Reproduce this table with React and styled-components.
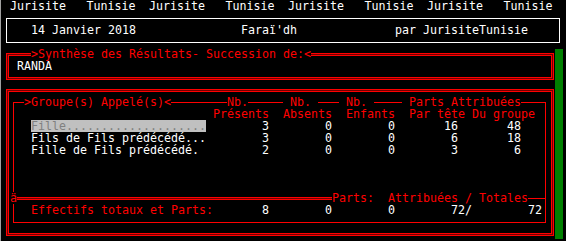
import React from 'react';
import styled, { createGlobalStyle } from 'styled-components';

const CH = 7;
const RED = '#ff0000';
const DARK_RED = '#700000';
const WHITE = '#ffffff';

const GlobalStyle = createGlobalStyle`
  html, body { margin: 0; padding: 0; background: #000; }
  #root { width: 566px; height: 241px; }
`;

const Screen = styled.div`
  box-sizing: border-box;
  width: 566px;
  height: 241px;
  overflow: hidden;
  background: #000;
  border-left: 1px solid #a0a0a0;
  padding-left: 2px;
  font-family: "DejaVu Sans Mono", "Liberation Mono", monospace;
  font-size: 11.63px;
  line-height: 12px;
  color: ${WHITE};
  white-space: pre;
`;

const Banner = styled.div`
  display: flex;
  height: 12px;
  padding-left: ${CH}px;
`;

const BannerWord = styled.span`
  width: ${p => p.$cols * CH}px;
`;

const DateBox = styled.div`
  box-sizing: border-box;
  margin: 6px 0 0 3px;
  width: 554px;
  height: 25px;
  border: 1px solid ${WHITE};
  padding: 5px 0 0 24px;
  display: grid;
  grid-template-columns: ${30 * CH}px ${22 * CH}px auto;
`;

const Main = styled.div`
  display: flex;
  margin-top: 6px;
`;

const Panels = styled.div`
  box-sizing: border-box;
  width: 552px;
  padding: 6px 0 0 5px;
  display: flex;
  flex-direction: column;
`;

const ScrollBar = styled.div`
  width: 8px;
  height: 190px;
  background: #008000;
`;

const Frame = styled.div`
  box-sizing: border-box;
  width: 544px;
  height: ${p => p.$h}px;
  margin-top: ${p => p.$gap || 0}px;
  border: 1px solid ${RED};
  box-shadow: 0 0 0 1px ${DARK_RED}, 0 0 0 2px ${RED};
  padding: ${p => p.$pad};
  display: flex;
  flex-direction: column;
`;

const Legend = styled.span`
  display: inline-block;
  width: fit-content;
  height: 12px;
  background: #000;
  color: ${RED};
  margin-left: ${p => (p.$at || 0) * CH}px;
  margin-top: ${p => p.$lift || 0}px;
`;

const Line = styled.div`
  height: 12px;
  color: ${p => p.$color || WHITE};
`;

const GroupBox = styled.div`
  box-sizing: border-box;
  height: 121px;
  border: 1px solid ${RED};
  padding-bottom: 6px;
  display: flex;
  flex-direction: column;
`;

const TableRow = styled.div`
  display: grid;
  grid-template-columns: ${26 * CH}px ${8 * CH}px ${9 * CH}px ${9 * CH}px ${11 * CH}px ${10 * CH}px;
  height: 12px;
  padding-left: 17px;
  margin-top: ${p => p.$lift || 0}px;
  color: ${p => p.$color || WHITE};
`;

const Cell = styled.div`
  text-align: ${p => (p.$left ? 'left' : 'right')};
  padding-right: ${p => (p.$inset || 0) * CH}px;
  padding-left: ${p => (p.$indent || 0) * CH}px;
  grid-column: ${p => (p.$span ? `span ${p.$span}` : 'auto')};
`;

const Name = styled.span`
  display: inline-block;
  height: 12px;
  background: ${p => (p.$selected ? '#c0c0c0' : 'transparent')};
  color: ${p => (p.$selected ? '#808080' : p.$red ? RED : WHITE)};
`;

const Divider = styled.div`
  display: flex;
  height: 12px;
  margin-top: auto;
  margin-left: -4px;
`;

const Junction = styled.span`
  width: ${CH}px;
  background: #000;
  color: ${RED};
`;

const DoubleRule = styled.div`
  flex: 1;
  box-sizing: border-box;
  height: 3px;
  margin-top: 5px;
  border-top: 1px solid ${RED};
  border-bottom: 1px solid ${RED};
  background: ${DARK_RED};
`;

const SingleRule = styled.div`
  width: 17px;
  height: 1px;
  margin-top: 6px;
  background: ${RED};
`;

const DividerLabel = styled.span`
  color: ${RED};
  background: #000;
`;

const rows = [
  { name: 'Fille....................', selected: true, p: 3, a: 0, e: 0, t: 16, g: 48 },
  { name: 'Fils de Fils prédécédé...', p: 3, a: 0, e: 0, t: 6, g: 18 },
  { name: 'Fille de Fils prédécédé.', p: 2, a: 0, e: 0, t: 3, g: 6 },
];

export default function App() {
  return (
    <>
      <GlobalStyle />
      <Screen>
        <Banner>
          {[0, 1, 2, 3].map(i => (
            <React.Fragment key={i}>
              <BannerWord $cols={11}>Jurisite</BannerWord>
              <BannerWord $cols={9}>Tunisie</BannerWord>
            </React.Fragment>
          ))}
        </Banner>
        <DateBox>
          <span>14 Janvier 2018</span>
          <span>Faraï'dh</span>
          <span>par JurisiteTunisie</span>
        </DateBox>
        <Main>
          <Panels>
            <Frame $h={23} $pad="0 0 0 8px">
              <Legend $at={2} $lift={-8}>&gt;Synthèse des Résultats- Succession de:&lt;</Legend>
              <Line>RANDA</Line>
            </Frame>
            <Frame $h={143} $gap={13} $pad="10px 5px 10px 4px">
              <GroupBox>
                <TableRow $lift={-7}>
                  <Cell $left><Legend $at={-1}>&gt;Groupe(s) Appelé(s)&lt;</Legend></Cell>
                  <Cell $left><Legend $at={2}>Nb.</Legend></Cell>
                  <Cell $left><Legend $at={2}> Nb. </Legend></Cell>
                  <Cell $left><Legend $at={1}> Nb. </Legend></Cell>
                  <Cell $left $span={2}><Legend $at={1}> Parts Attribuées</Legend></Cell>
                </TableRow>
                <TableRow $color={RED}>
                  <Cell />
                  <Cell>Présents</Cell>
                  <Cell>Absents</Cell>
                  <Cell>Enfants</Cell>
                  <Cell $left $span={2} $indent={2}>Par tête Du groupe</Cell>
                </TableRow>
                {rows.map(r => (
                  <TableRow key={r.name}>
                    <Cell $left><Name $selected={r.selected}>{r.name}</Name></Cell>
                    <Cell>{r.p}</Cell>
                    <Cell>{r.a}</Cell>
                    <Cell>{r.e}</Cell>
                    <Cell $inset={2}>{r.t}</Cell>
                    <Cell $inset={3}>{r.g}</Cell>
                  </TableRow>
                ))}
                <Divider>
                  <Junction>ä</Junction>
                  <DoubleRule />
                  <DividerLabel>Parts:  Attribuées / Totales</DividerLabel>
                  <SingleRule />
                </Divider>
                <TableRow>
                  <Cell $left><Name $red>Effectifs totaux et Parts:</Name></Cell>
                  <Cell>8</Cell>
                  <Cell>0</Cell>
                  <Cell>0</Cell>
                  <Cell>72/</Cell>
                  <Cell>72</Cell>
                </TableRow>
              </GroupBox>
            </Frame>
          </Panels>
          <ScrollBar />
        </Main>
      </Screen>
    </>
  );
}
